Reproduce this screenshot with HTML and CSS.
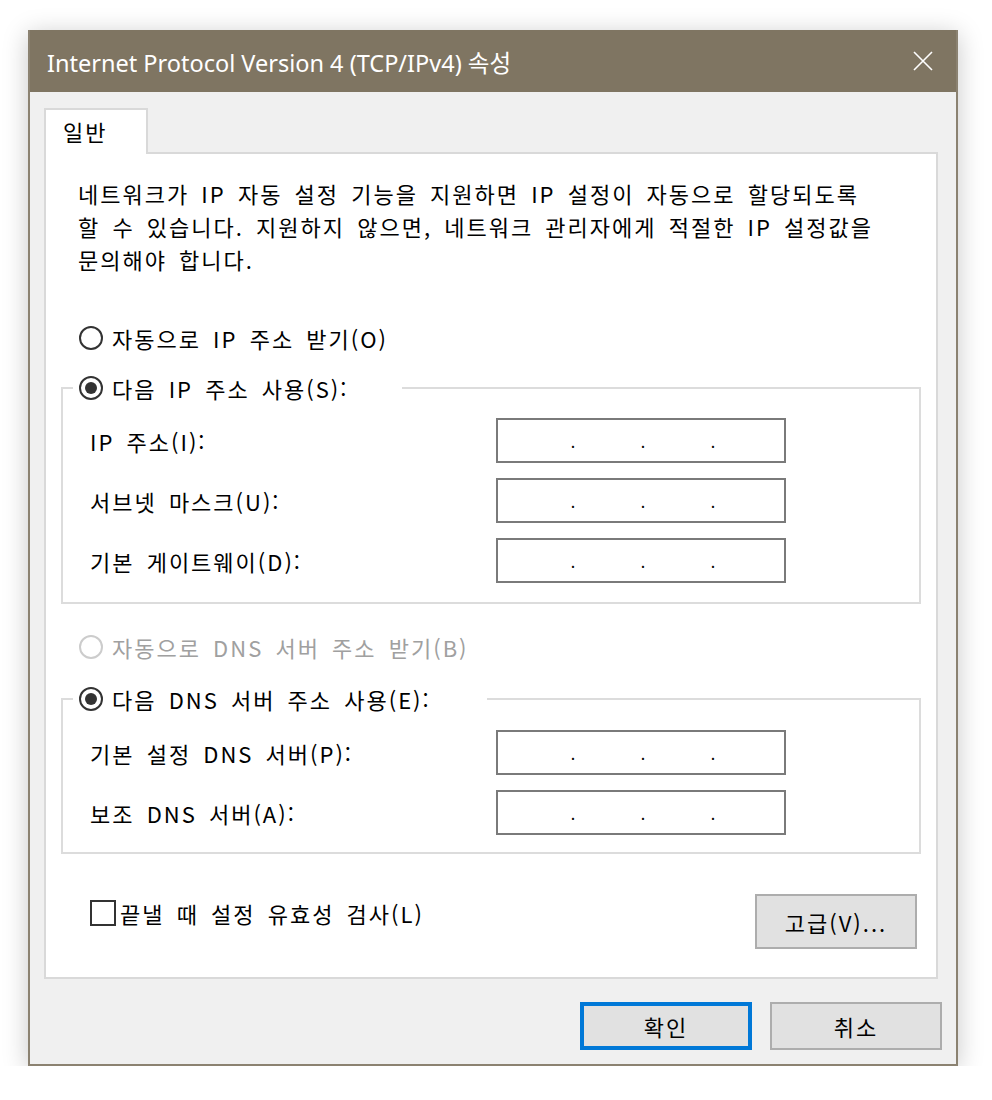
FILE: index.html
```html
<!DOCTYPE html>
<html lang="ko">
<head>
    <meta charset="UTF-8">
    <title>Internet Protocol Version 4 (TCP/IPv4) 속성</title>
    <link rel="stylesheet" href="styles.css">
</head>
<body>

    <div class="window">
        <div class="titlebar">
            <span class="title">Internet Protocol Version 4 (TCP/IPv4) 속성</span>
            <svg class="close" width="20" height="20" viewBox="0 0 20 20">
                <path d="M1 1L19 19M19 1L1 19" stroke="#fff" stroke-width="1.6" fill="none"/>
            </svg>
        </div>

        <div class="dialog-body">
            <div class="tabs">
                <div class="tab">일반</div>
            </div>

            <div class="panel">
                <p class="desc">
                    네트워크가 IP 자동 설정 기능을 지원하면 IP 설정이 자동으로 할당되도록<br>
                    할 수 있습니다. 지원하지 않으면, 네트워크 관리자에게 적절한 IP 설정값을<br>
                    문의해야 합니다.
                </p>

                <div class="radio radio-row first-radio">
                    <span class="radio-mark"></span>
                    <span>자동으로 IP 주소 받기(O)</span>
                </div>

                <fieldset class="group group-ip">
                    <legend class="legend-ip">
                        <div class="radio">
                            <span class="radio-mark on"></span>
                            <span>다음 IP 주소 사용(S):</span>
                        </div>
                    </legend>
                    <div class="fields">
                        <div class="field-row">
                            <span class="field-label">IP 주소(I):</span>
                            <div class="ip-box"><span class="oct first"></span><span class="dot">.</span><span class="oct"></span><span class="dot">.</span><span class="oct"></span><span class="dot">.</span></div>
                        </div>
                        <div class="field-row">
                            <span class="field-label">서브넷 마스크(U):</span>
                            <div class="ip-box"><span class="oct first"></span><span class="dot">.</span><span class="oct"></span><span class="dot">.</span><span class="oct"></span><span class="dot">.</span></div>
                        </div>
                        <div class="field-row">
                            <span class="field-label">기본 게이트웨이(D):</span>
                            <div class="ip-box"><span class="oct first"></span><span class="dot">.</span><span class="oct"></span><span class="dot">.</span><span class="oct"></span><span class="dot">.</span></div>
                        </div>
                    </div>
                </fieldset>

                <div class="radio radio-row dns-radio disabled">
                    <span class="radio-mark"></span>
                    <span>자동으로 DNS 서버 주소 받기(B)</span>
                </div>

                <fieldset class="group group-dns">
                    <legend class="legend-dns">
                        <div class="radio">
                            <span class="radio-mark on"></span>
                            <span>다음 DNS 서버 주소 사용(E):</span>
                        </div>
                    </legend>
                    <div class="fields">
                        <div class="field-row">
                            <span class="field-label">기본 설정 DNS 서버(P):</span>
                            <div class="ip-box"><span class="oct first"></span><span class="dot">.</span><span class="oct"></span><span class="dot">.</span><span class="oct"></span><span class="dot">.</span></div>
                        </div>
                        <div class="field-row">
                            <span class="field-label">보조 DNS 서버(A):</span>
                            <div class="ip-box"><span class="oct first"></span><span class="dot">.</span><span class="oct"></span><span class="dot">.</span><span class="oct"></span><span class="dot">.</span></div>
                        </div>
                    </div>
                </fieldset>

                <div class="panel-footer">
                    <div class="check">
                        <span class="check-box"></span>
                        <span>끝낼 때 설정 유효성 검사(L)</span>
                    </div>
                    <button class="btn btn-advanced">고급(V)...</button>
                </div>
            </div>

            <div class="actions">
                <button class="btn btn-default">확인</button>
                <button class="btn">취소</button>
            </div>
        </div>
    </div>

</body>
</html>
```

FILE: styles.css
```css
body {
    margin: 0;
    background-color: #fff;
    font-family: "Noto Sans CJK KR", sans-serif;
    font-size: 22px;
    letter-spacing: 2px;
    word-spacing: 4px;
    color: #000;
}

.window {
    box-sizing: border-box;
    width: 930px;
    margin: 30px 0 0 28px;
    border: 2px solid #8b8271;
    border-top: 0;
    background-color: #f0f0f0;
    box-shadow: 0 4px 24px rgba(0, 0, 0, 0.22);
}

.titlebar {
    height: 62px;
    background-color: #7f7562;
    color: #fff;
    display: flex;
    align-items: center;
    justify-content: space-between;
    padding: 0 23px 0 17px;
}

.title {
    font-family: "Noto Sans", "Noto Sans CJK KR", sans-serif;
    font-size: 23.5px;
    letter-spacing: 0;
    word-spacing: 0;
    padding-top: 2px;
}

.close {
    display: block;
}

.dialog-body {
    padding: 16px 14px 14px 14px;
}

.tabs {
    display: flex;
    margin-bottom: -2px;
}

.tab {
    position: relative;
    box-sizing: border-box;
    width: 104px;
    height: 46px;
    border: 2px solid #d9d9d9;
    border-bottom: 0;
    background-color: #fff;
    padding-left: 17px;
    line-height: 42px;
}

.panel {
    background-color: #fff;
    border: 2px solid #d9d9d9;
    margin-right: 4px;
    padding: 0 15px 28px;
}

.desc {
    margin: 23px 0 0 17px;
    line-height: 33px;
    white-space: nowrap;
}

/* radio buttons */
.radio {
    display: flex;
    align-items: center;
    height: 34px;
    gap: 9px;
    white-space: nowrap;
}

.radio-row {
    margin-left: 18px;
}

.first-radio {
    margin-top: 45px;
}

.dns-radio {
    margin-top: 26px;
}

.radio-mark {
    box-sizing: border-box;
    width: 24px;
    height: 24px;
    flex-shrink: 0;
    border: 2px solid #333;
    border-radius: 50%;
    background-color: #fff;
    display: flex;
    align-items: center;
    justify-content: center;
}

.radio-mark.on::after {
    content: "";
    width: 12px;
    height: 12px;
    border-radius: 50%;
    background-color: #333;
}

.radio.disabled {
    color: #a0a0a0;
}

.radio.disabled .radio-mark {
    border-color: #cccccc;
}

/* group boxes */
.group {
    margin: 16px 0 0;
    padding: 13px 0 19px 0;
    border: 2px solid #dcdcdc;
    min-width: 0;
}

.group-dns {
    margin-top: 18px;
    padding-top: 14px;
    padding-bottom: 17px;
}

legend {
    box-sizing: border-box;
    margin-left: 10px;
    padding: 0 0 0 6px;
}

.legend-ip {
    width: 329px;
}

.legend-dns {
    width: 414px;
}

.fields {
    display: flex;
    flex-direction: column;
    gap: 15px;
    padding-left: 27px;
}

.field-row {
    display: flex;
    align-items: center;
    height: 45px;
}

.field-label {
    width: 406px;
    white-space: nowrap;
}

.ip-box {
    box-sizing: border-box;
    width: 290px;
    height: 45px;
    border: 2px solid #7a7a7a;
    background-color: #fff;
    display: flex;
}

.oct {
    width: 64px;
}

.oct.first {
    width: 72px;
}

.dot {
    width: 6px;
    text-align: center;
    font-size: 16px;
    line-height: 42px;
    letter-spacing: 0;
}

/* bottom of the tab page */
.panel-footer {
    display: flex;
    justify-content: space-between;
    align-items: flex-start;
    margin-top: 40px;
    padding: 0 4px 0 29px;
}

.check {
    display: flex;
    align-items: center;
    gap: 4px;
    height: 34px;
    margin-top: 2px;
    white-space: nowrap;
}

.check-box {
    box-sizing: border-box;
    width: 26px;
    height: 26px;
    border: 2px solid #333;
    background-color: #fff;
}

.btn {
    font: inherit;
    letter-spacing: inherit;
    word-spacing: inherit;
    color: #000;
    background-color: #e1e1e1;
    border: 2px solid #adadad;
    padding: 0;
    cursor: pointer;
}

.btn-advanced {
    width: 162px;
    height: 55px;
}

.actions {
    display: flex;
    justify-content: flex-end;
    gap: 18px;
    margin-top: 23px;
}

.actions .btn {
    width: 172px;
    height: 48px;
}

.btn-default {
    border: 4px solid #0078d7;
}
```
